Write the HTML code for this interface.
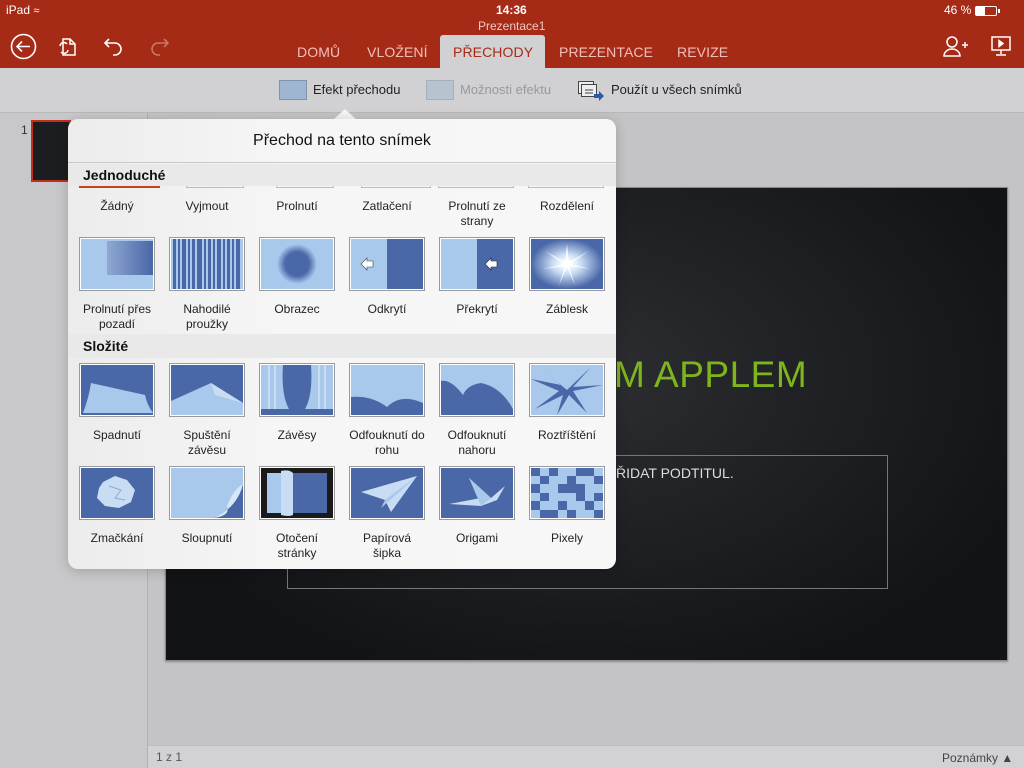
<!DOCTYPE html>
<html><head><meta charset="utf-8">
<style>
*{margin:0;padding:0;box-sizing:border-box}
body{width:1024px;height:768px;overflow:hidden;position:relative;background:#c4c4c6;font-family:"Liberation Sans",sans-serif;color:#000}
.a{position:absolute}
#hdr{left:0;top:0;width:1024px;height:68px;background:#a62b17}
.w{color:#fff}
.tab{position:absolute;top:44px;font-size:14px;color:#f0c0b8;letter-spacing:0.1px}
#tb{left:0;top:68px;width:1024px;height:45px;background:#d1d1d3;border-bottom:1px solid #b8b8b8}
#left{left:0;top:113px;width:148px;height:655px;background:#c8c8ca;border-right:1px solid #b0b0b2}
#bot{left:148px;top:745px;width:876px;height:23px;background:#d2d2d4;border-top:1px solid #bdbdbd}
#slide{left:165px;top:187px;width:843px;height:474px;background:radial-gradient(ellipse at 50% 40%,#2c2e31,#121316 80%);border:1px solid #8a8a8a;box-shadow:0 1px 2px rgba(0,0,0,.3)}
#pop{left:68px;top:119px;width:548px;height:450px;background:linear-gradient(90deg,#ececec 0,#f6f6f6 40%,#f7f7f7);border-radius:10px;overflow:hidden;box-shadow:0 2px 12px rgba(0,0,0,.2)}
.sec{position:absolute;left:0;width:548px;background:#e9e9ea;font-size:14px;font-weight:bold;color:#111;padding-left:15px}
.t{position:absolute;width:76px;height:54px;border:1px solid #9a9a9a;background:#fff;padding:1px}
.t svg{display:block;width:72px;height:50px}
.l{position:absolute;width:80px;margin-left:2px;text-align:center;font-size:12px;line-height:15px;color:#222}
</style></head><body>
<div id="hdr" class="a">
 <div class="a w" style="left:6px;top:3px;font-size:12px">iPad <span style="font-size:11px">&#8776;</span></div>
 <div class="a w" style="left:496px;top:3px;font-size:12px;font-weight:bold">14:36</div>
 <div class="a w" style="left:944px;top:3px;font-size:12px">46 %</div>
 <div class="a" style="left:975px;top:6px;width:22px;height:10px;border:1px solid #fff;border-radius:2px"><div style="width:9px;height:8px;background:#fff"></div></div>
 <div class="a" style="left:998px;top:9px;width:2px;height:4px;background:#fff"></div>
 <div class="a" style="left:478px;top:19px;font-size:12px;color:#f0c8c0">Prezentace1</div>
 <svg class="a" style="left:10px;top:33px" width="27" height="27" viewBox="0 0 27 27" fill="none" stroke="#fff" stroke-width="1.6"><circle cx="13.5" cy="13.5" r="12"/><path d="M20 13.5H7M12 8.5l-5 5 5 5"/></svg>
 <svg class="a" style="left:56px;top:36px" width="22" height="22" viewBox="0 0 22 22" fill="none" stroke="#fff" stroke-width="1.5"><path d="M7 3h7l5 5v11H7z"/><path d="M14 3v5h5"/><path d="M4 10a4 4 0 0 1 7-2M12 14a4 4 0 0 1-7 2"/></svg>
 <svg class="a" style="left:103px;top:36px" width="22" height="20" viewBox="0 0 22 20" fill="none" stroke="#fff" stroke-width="1.6"><path d="M6 3L2 7l4 4M2 7h10a6 6 0 0 1 0 12h-2"/></svg>
 <svg class="a" style="left:148px;top:36px" width="22" height="20" viewBox="0 0 22 20" fill="none" stroke="#c9776a" stroke-width="1.6"><path d="M16 3l4 4-4 4M20 7H10a6 6 0 0 0 0 12h2"/></svg>
 <div class="tab" style="left:297px">DOMŮ</div>
 <div class="tab" style="left:367px">VLOŽENÍ</div>
 <div class="a" style="left:440px;top:35px;width:105px;height:33px;background:#d1d1d3;border-radius:3px 3px 0 0"></div>
 <div class="tab" style="left:453px;color:#a62b17">PŘECHODY</div>
 <div class="tab" style="left:559px">PREZENTACE</div>
 <div class="tab" style="left:677px">REVIZE</div>
 <svg class="a" style="left:943px;top:35px" width="26" height="22" viewBox="0 0 26 22" fill="none" stroke="#fff" stroke-width="1.5"><circle cx="9" cy="7" r="5"/><path d="M1 21a8 7 0 0 1 16 0zM19 10h6M22 7v6"/></svg>
 <svg class="a" style="left:990px;top:35px" width="22" height="22" viewBox="0 0 22 22" fill="none" stroke="#fff" stroke-width="1.5"><rect x="2" y="2" width="18" height="13"/><path d="M11 15v4M6 20h10"/><path d="M9 5.5v6l4-3z" fill="#fff"/></svg>
</div>
<div id="tb" class="a">
 <div class="a" style="left:279px;top:12px;width:28px;height:20px;background:#9fb6d2;border:1px solid #8193aa"></div>
 <div class="a" style="left:313px;top:14px;font-size:13px;color:#222">Efekt přechodu</div>
 <div class="a" style="left:426px;top:12px;width:28px;height:20px;background:#b7c3d0;border:1px solid #a7b0ba"></div>
 <div class="a" style="left:460px;top:14px;font-size:13px;color:#9a9a9a">Možnosti efektu</div>
 <svg class="a" style="left:577px;top:12px" width="28" height="22" viewBox="0 0 28 22" fill="#eee" stroke="#444" stroke-width="1"><rect x="1.5" y="1.5" width="15" height="12"/><rect x="4.5" y="4.5" width="15" height="12"/><path d="M8 10h8M8 13h8" /><path d="M17 14h5v-3l5 5-5 5v-3h-5z" fill="#2b5aa8" stroke="none"/></svg>
 <div class="a" style="left:611px;top:14px;font-size:13px;color:#222">Použít u všech snímků</div>
</div>
<div id="left" class="a">
 <div class="a" style="left:21px;top:10px;font-size:12px;color:#333">1</div>
 <div class="a" style="left:31px;top:7px;width:40px;height:62px;border:2px solid #c0301c;background:#1c1d20"></div>
</div>
<div id="slide" class="a">
 <div class="a" style="left:448px;top:166px;font-size:37px;color:#7fb51c;letter-spacing:0.5px">M APPLEM</div>
 <div class="a" style="left:121px;top:267px;width:601px;height:134px;border:1px solid #777"></div>
 <div class="a" style="left:450px;top:277px;font-size:14px;color:#ddd">ŘIDAT PODTITUL.</div>
</div>
<div id="bot" class="a">
 <div class="a" style="left:8px;top:4px;font-size:12px;color:#555">1 z 1</div>
 <div class="a" style="left:794px;top:5px;font-size:12px;color:#444">Poznámky ▲</div>
</div>
<div class="a" style="left:333px;top:109px;width:0;height:0;border-left:12px solid transparent;border-right:12px solid transparent;border-bottom:11px solid #f5f5f5"></div>
<div id="pop" class="a">
 <div class="a" style="left:0;top:13px;width:548px;text-align:center;font-size:16px;color:#111">Přechod na tento snímek</div>
 <div class="a" style="left:0;top:43px;width:548px;height:1px;background:#c8c8c8"></div>
 <div class="a" style="left:11px;top:64px;width:81px;height:5px;border:2px solid #c8401f;border-top:none"></div>
 <div class="a" style="left:118px;top:66px;width:58px;height:3px;border:1px solid #bbb;border-top:none"></div>
 <div class="a" style="left:208px;top:66px;width:58px;height:3px;border:1px solid #bbb;border-top:none"></div>
 <div class="a" style="left:293px;top:66px;width:70px;height:3px;border:1px solid #bbb;border-top:none"></div>
 <div class="a" style="left:370px;top:66px;width:76px;height:3px;border:1px solid #bbb;border-top:none"></div>
 <div class="a" style="left:460px;top:66px;width:76px;height:3px;border:1px solid #bbb;border-top:none"></div>
 <div class="sec" style="top:45px;height:22px;line-height:22px">Jednoduché</div>
 <div class="l" style="left:7px;top:80px">Žádný</div>
 <div class="l" style="left:97px;top:80px">Vyjmout</div>
 <div class="l" style="left:187px;top:80px">Prolnutí</div>
 <div class="l" style="left:277px;top:80px">Zatlačení</div>
 <div class="l" style="left:367px;top:80px">Prolnutí ze strany</div>
 <div class="l" style="left:457px;top:80px">Rozdělení</div>
 <div class="t" style="left:11px;top:118px"><svg viewBox="0 0 72 50"><defs><linearGradient id="g1" x1="0" x2="1"><stop offset="0" stop-color="#8fa9d4"/><stop offset="1" stop-color="#4a66a6"/></linearGradient></defs><rect width="72" height="50" fill="#a8c8ec"/><rect x="26" y="2" width="46" height="34" fill="url(#g1)"/></svg></div>
 <div class="t" style="left:101px;top:118px"><svg viewBox="0 0 72 50"><rect width="72" height="50" fill="#a8c8ec"/><g fill="#4a68a8"><rect x="2" width="3" height="50"/><rect x="7" width="2" height="50"/><rect x="11" width="4" height="50"/><rect x="17" width="2" height="50"/><rect x="21" width="3" height="50"/><rect x="26" width="5" height="50"/><rect x="33" width="2" height="50"/><rect x="37" width="3" height="50"/><rect x="42" width="2" height="50"/><rect x="46" width="4" height="50"/><rect x="52" width="2" height="50"/><rect x="56" width="3" height="50"/><rect x="61" width="2" height="50"/><rect x="65" width="4" height="50"/></g></svg></div>
 <div class="t" style="left:191px;top:118px"><svg viewBox="0 0 72 50"><defs><radialGradient id="g2"><stop offset=".6" stop-color="#4a68a8"/><stop offset="1" stop-color="#a8c8ec"/></radialGradient></defs><rect width="72" height="50" fill="#a8c8ec"/><ellipse cx="36" cy="25" rx="20" ry="20" fill="url(#g2)"/></svg></div>
 <div class="t" style="left:281px;top:118px"><svg viewBox="0 0 72 50"><rect width="72" height="50" fill="#a8c8ec"/><rect x="36" width="36" height="50" fill="#4a68a8"/><path d="M10 25l6-6v3h6v6h-6v3z" fill="#fff" stroke="#345" stroke-width=".6"/></svg></div>
 <div class="t" style="left:371px;top:118px"><svg viewBox="0 0 72 50"><rect width="72" height="50" fill="#a8c8ec"/><rect x="36" width="36" height="50" fill="#4a68a8"/><path d="M44 25l6-6v3h6v6h-6v3z" fill="#fff" stroke="#123" stroke-width=".6"/></svg></div>
 <div class="t" style="left:461px;top:118px"><svg viewBox="0 0 72 50"><defs><radialGradient id="g3"><stop offset=".1" stop-color="#fff"/><stop offset=".4" stop-color="#c8dcf4"/><stop offset="1" stop-color="#4a68a8"/></radialGradient></defs><rect width="72" height="50" fill="url(#g3)"/><path d="M36 5L38 23 58 12 39 25 60 30 38 27 44 46 36 28 28 46 34 27 12 30 33 25 14 12 34 23z" fill="#fff" opacity=".8"/></svg></div>
 <div class="l" style="left:7px;top:183px">Prolnutí přes pozadí</div>
 <div class="l" style="left:97px;top:183px">Nahodilé proužky</div>
 <div class="l" style="left:187px;top:183px">Obrazec</div>
 <div class="l" style="left:277px;top:183px">Odkrytí</div>
 <div class="l" style="left:367px;top:183px">Překrytí</div>
 <div class="l" style="left:457px;top:183px">Záblesk</div>
 <div class="sec" style="top:215px;height:24px;line-height:24px">Složité</div>
 <div class="t" style="left:11px;top:244px"><svg viewBox="0 0 72 50"><rect width="72" height="50" fill="#4a68a8"/><path d="M10 18L64 30Q66 40 72 48H2Q8 32 10 18z" fill="#a8c8ec"/></svg></div>
 <div class="t" style="left:101px;top:244px"><svg viewBox="0 0 72 50"><rect width="72" height="50" fill="#4a68a8"/><path d="M0 36L40 18 72 38V50H0z" fill="#a8c8ec"/><path d="M40 18L72 38 44 30z" fill="#c8dcf4"/></svg></div>
 <div class="t" style="left:191px;top:244px"><svg viewBox="0 0 72 50"><rect width="72" height="50" fill="#4a68a8"/><path d="M0 0H22Q20 30 28 44H0z" fill="#a8c8ec"/><path d="M72 0H50Q52 30 44 44H72z" fill="#a8c8ec"/><path d="M8 0v44M14 0v44M58 0v44M64 0v44" stroke="#c8dcf4" stroke-width="2"/></svg></div>
 <div class="t" style="left:281px;top:244px"><svg viewBox="0 0 72 50"><rect width="72" height="50" fill="#4a68a8"/><path d="M0 0H72V38Q50 28 36 42Q20 30 0 32z" fill="#a8c8ec"/></svg></div>
 <div class="t" style="left:371px;top:244px"><svg viewBox="0 0 72 50"><rect width="72" height="50" fill="#4a68a8"/><path d="M0 0H72V44Q60 22 40 18Q26 20 22 30Q10 14 0 16z" fill="#a8c8ec"/></svg></div>
 <div class="t" style="left:461px;top:244px"><svg viewBox="0 0 72 50"><rect width="72" height="50" fill="#a8c8ec"/><path d="M36 25L10 4 30 20 0 14 28 26 4 44 32 30 26 50 38 30 56 48 42 26 72 20 42 22 60 2z" fill="#4a68a8"/></svg></div>
 <div class="l" style="left:7px;top:309px">Spadnutí</div>
 <div class="l" style="left:97px;top:309px">Spuštění závěsu</div>
 <div class="l" style="left:187px;top:309px">Závěsy</div>
 <div class="l" style="left:277px;top:309px">Odfouknutí do rohu</div>
 <div class="l" style="left:367px;top:309px">Odfouknutí nahoru</div>
 <div class="l" style="left:457px;top:309px">Roztříštění</div>
 <div class="t" style="left:11px;top:347px"><svg viewBox="0 0 72 50"><rect width="72" height="50" fill="#4a68a8"/><path d="M22 14L34 8 46 12 54 22 50 34 38 40 24 38 16 30 18 20z" fill="#c8dcf4"/><path d="M28 18L40 22 34 30 44 32" stroke="#8fa9d4" fill="none"/></svg></div>
 <div class="t" style="left:101px;top:347px"><svg viewBox="0 0 72 50"><rect width="72" height="50" fill="#a8c8ec"/><path d="M72 16Q66 40 42 50H72z" fill="#4a68a8"/><path d="M72 16Q62 22 56 38Q60 48 42 50Q66 40 72 16z" fill="#d8e6f8"/></svg></div>
 <div class="t" style="left:191px;top:347px"><svg viewBox="0 0 72 50"><rect width="72" height="50" fill="#1a1a1a"/><rect x="6" y="5" width="60" height="40" fill="#4a68a8"/><path d="M6 5H30V45H6z" fill="#a8c8ec"/><path d="M20 3Q28 1 32 5V47Q28 49 20 47z" fill="#c8dcf4"/></svg></div>
 <div class="t" style="left:281px;top:347px"><svg viewBox="0 0 72 50"><rect width="72" height="50" fill="#4a68a8"/><path d="M10 24L66 8 40 44 34 32z" fill="#c8dcf4"/><path d="M34 32L66 8 30 40z" fill="#a8c8ec"/></svg></div>
 <div class="t" style="left:371px;top:347px"><svg viewBox="0 0 72 50"><rect width="72" height="50" fill="#4a68a8"/><path d="M8 36L40 30 28 10 50 30 64 18 56 32 40 38z" fill="#c8dcf4"/><path d="M28 10L40 38 50 30z" fill="#a8c8ec"/></svg></div>
 <div class="t" style="left:461px;top:347px"><svg viewBox="0 0 72 50"><rect width="72" height="50" fill="#a8c8ec"/><g fill="#4a68a8"><rect x="0" y="0" width="9" height="8"/><rect x="18" y="0" width="9" height="8"/><rect x="45" y="0" width="18" height="8"/><rect x="9" y="8" width="9" height="8"/><rect x="36" y="8" width="9" height="8"/><rect x="63" y="8" width="9" height="8"/><rect x="0" y="16" width="9" height="9"/><rect x="27" y="16" width="27" height="9"/><rect x="9" y="25" width="9" height="8"/><rect x="45" y="25" width="9" height="8"/><rect x="63" y="25" width="9" height="8"/><rect x="0" y="33" width="9" height="9"/><rect x="27" y="33" width="9" height="9"/><rect x="54" y="33" width="9" height="9"/><rect x="9" y="42" width="18" height="8"/><rect x="36" y="42" width="9" height="8"/><rect x="63" y="42" width="9" height="8"/></g></svg></div>
 <div class="l" style="left:7px;top:412px">Zmačkání</div>
 <div class="l" style="left:97px;top:412px">Sloupnutí</div>
 <div class="l" style="left:187px;top:412px">Otočení stránky</div>
 <div class="l" style="left:277px;top:412px">Papírová<br>šipka</div>
 <div class="l" style="left:367px;top:412px">Origami</div>
 <div class="l" style="left:457px;top:412px">Pixely</div>
</div>
</body></html>
